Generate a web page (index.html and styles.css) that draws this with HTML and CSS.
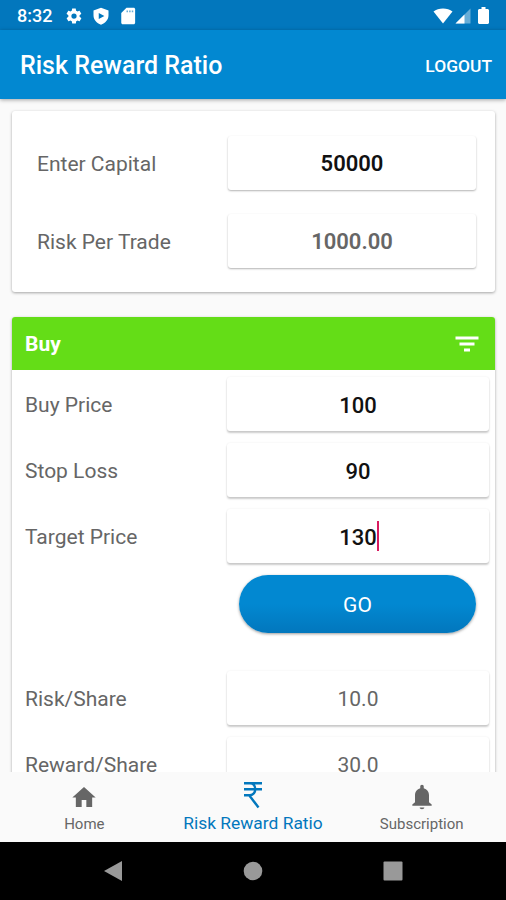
FILE: index.html
```
<!DOCTYPE html>
<html lang="en">
<head>
  <meta charset="utf-8">
  <title>Risk Reward Ratio</title>
  <link rel="stylesheet" href="styles.css">
</head>
<body>
  <div class="status-bar">
    <span class="clock">8:32</span>
    <svg class="gear" width="18" height="18" viewBox="0 0 24 24"><path d="M19.4 13a7.500 7.500 0 0 0 0-2l2.100-1.600c.2-.2.250-.4.100-.7l-2-3.400c-.1-.2-.4-.3-.6-.2l-2.500 1a7.300 7.300 0 0 0-1.700-1l-.4-2.600c0-.3-.2-.5-.5-.5h-4c-.2 0-.4.2-.5.5l-.4 2.600a7.300 7.300 0 0 0-1.700 1l-2.500-1c-.2-.1-.5 0-.6.2l-2 3.400c-.1.200-.1.500.1.700L4.500 11a7.500 7.500 0 0 0 0 2l-2.100 1.600c-.2.200-.2.400-.1.700l2 3.400c.1.200.4.300.6.200l2.500-1c.5.4 1.100.7 1.700 1l.4 2.600c0 .3.200.5.500.5h4c.2 0 .5-.2.500-.5l.4-2.600c.6-.3 1.200-.6 1.700-1l2.500 1c.2.100.5 0 .6-.2l2-3.400c.1-.2.100-.5-.1-.7zM12 15.500a3.500 3.500 0 1 1 0-7 3.500 3.500 0 0 1 0 7z"/></svg>
    <svg class="shield" width="18" height="18" viewBox="0 0 24 24"><path fill-rule="evenodd" d="M12 1 2 4.500V11c0 6 4.200 10.500 10 12.500 5.800-2 10-6.500 10-12.500V4.500zM9 8l7.500 4L9 16z"/></svg>
    <svg class="card-icon" width="18" height="18" viewBox="0 0 24 24"><path d="M19.500 1H10L3 8v13c0 1.100.9 2 2 2h14.500c1.100 0 2-.9 2-2V3c0-1.100-.9-2-2-2z"/><path d="M10 4.500h2V7h-2zm3.500 0h2V7h-2zm3.500 0h2V7h-2z" fill="#0277bd" opacity=".6"/></svg>
    <span class="spacer"></span>
    <svg class="wifi" width="20" height="16" viewBox="0 0 20 16"><path d="M10 15.500.5 3.500C3 1.500 6.300.5 10 .5s7 1 9.500 3z"/></svg>
    <svg class="signal" width="16" height="16" viewBox="0 0 16 16"><path d="M15.500.5v15H.5z" opacity=".4"/><path d="M9.500 6.500v9h-9z"/></svg>
    <svg class="battery" width="11" height="17" viewBox="0 0 11 17"><path d="M3.500 0h4v2H10l1 1v13l-1 1H1l-1-1V3l1-1h2.500z"/></svg>
  </div>
  <header>
    <h1>Risk Reward Ratio</h1>
    <a class="logout">LOGOUT</a>
  </header>
  <main>
    <section class="card capital">
      <div class="row">
        <label>Enter Capital</label>
        <div class="field">50000</div>
      </div>
      <div class="row">
        <label>Risk Per Trade</label>
        <div class="field grey">1000.00</div>
      </div>
    </section>
    <section class="card buy">
      <div class="card-title">
        <h2>Buy</h2>
        <svg width="24" height="18" viewBox="0 0 24 18"><path d="M.5 1.500h23v3H.5zM4.500 7.500h15v3h-15zM9 13.500h6v3H9z"/></svg>
      </div>
      <div class="row">
        <label>Buy Price</label>
        <div class="field">100</div>
      </div>
      <div class="row">
        <label>Stop Loss</label>
        <div class="field">90</div>
      </div>
      <div class="row">
        <label>Target Price</label>
        <div class="field">130<span class="cursor"></span></div>
      </div>
      <div class="go-row">
        <button>GO</button>
      </div>
      <div class="row">
        <label>Risk/Share</label>
        <div class="field result">10.0</div>
      </div>
      <div class="row">
        <label>Reward/Share</label>
        <div class="field result">30.0</div>
      </div>
    </section>
  </main>
  <nav class="tabs">
    <a class="tab">
      <svg width="28" height="28" viewBox="0 0 24 24"><path d="M10 20.500v-6h4v6h5v-8h3L12 3.500 2 12.500h3v8z"/></svg>
      <span>Home</span>
    </a>
    <a class="tab active">
      <svg width="28" height="28" viewBox="0 0 28 28"><path d="M5 2.200h18M5 8.200h18M5 14.200h6c7 0 7-12 0-12M10 14l9.500 12.500" fill="none" stroke="currentColor" stroke-width="2.400"/></svg>
      <span>Risk Reward Ratio</span>
    </a>
    <a class="tab">
      <svg width="28" height="28" viewBox="0 0 24 24"><path d="M12 22.500c1.100 0 2-.7 2-1.500h-4c0 .8.900 1.500 2 1.500zm6-6v-6c0-3-1.800-5.300-4.500-6V3c0-.9-.6-1.500-1.500-1.500s-1.500.6-1.500 1.500v1.500c-2.700.7-4.500 3-4.500 6v6l-2.300 2v1h16.600v-1z"/></svg>
      <span>Subscription</span>
    </a>
  </nav>
  <div class="system-nav">
    <svg width="20" height="22" viewBox="0 0 20 22"><path d="M19 1v20L1 11z"/></svg>
    <svg width="20" height="20" viewBox="0 0 20 20"><circle cx="10" cy="10" r="9.300"/></svg>
    <svg width="20" height="20" viewBox="0 0 20 20"><rect x=".5" y=".5" width="19" height="19" rx="1"/></svg>
  </div>
</body>
</html>
```
FILE: styles.css
```
* {
  box-sizing: border-box;
}
body {
  font-family: Roboto, sans-serif;
  font-size: 21px;
  background: #fafafa;
  color: #666;
  margin: 0;
  height: 900px;
  display: flex;
  flex-direction: column;
  overflow: hidden;
}
svg {
  fill: currentColor;
  flex: none;
}
.status-bar {
  height: 30px;
  flex: none;
  background: #0277bd;
  color: #fff;
  display: flex;
  align-items: center;
  padding: 1px 17px 0 17px;
}
.clock {
  font-size: 18px;
  font-weight: 500;
  width: 48px;
}
.gear, .shield {
  margin-right: 9px;
}
.spacer {
  flex: 1;
}
.wifi {
  margin-right: 2px;
}
.signal {
  margin-right: 7px;
}
header {
  height: 69px;
  flex: none;
  background: #0288d1;
  color: #fff;
  display: flex;
  align-items: center;
  justify-content: space-between;
  padding: 2px 14px 0 20px;
  box-shadow: 0 1px 4px rgba(0, 0, 0, 0.35);
  z-index: 1;
}
h1 {
  font-size: 25px;
  font-weight: 500;
  margin: 0;
}
.logout {
  font-size: 17.4px;
  font-weight: 500;
}
main {
  flex: 1;
  min-height: 0;
  overflow: hidden;
  padding: 12px 11px 0 12px;
}
.card {
  background: #fff;
  border-radius: 3px;
  box-shadow: 0 1px 3px rgba(0, 0, 0, 0.35);
}
.capital {
  height: 181px;
  padding: 24px 19px 0 25px;
  margin-bottom: 25px;
}
.row {
  display: flex;
  align-items: center;
  justify-content: space-between;
}
label {
  padding-top: 2px;
}
.capital .row {
  height: 55px;
  margin-bottom: 23px;
}
.field {
  width: 262px;
  height: 54px;
  padding-top: 2px;
  display: flex;
  align-items: center;
  justify-content: center;
  background: #fff;
  border-radius: 3px;
  box-shadow: 0 2px 2px rgba(0, 0, 0, 0.2), 0 0 2px rgba(0, 0, 0, 0.08);
  color: #111;
  font-size: 22px;
  font-weight: 500;
}
.capital .field {
  width: 248px;
  font-weight: 600;
  box-shadow: 0 1px 2px rgba(0, 0, 0, 0.3);
}
.capital .grey {
  color: #666;
}
.card-title {
  height: 53px;
  background: #64dd17;
  color: #fff;
  border-radius: 3px 3px 0 0;
  display: flex;
  align-items: center;
  justify-content: space-between;
  padding: 0 16px 0 13px;
}
h2 {
  font-size: 21px;
  font-weight: 700;
  margin: 0;
}
.buy {
  height: 600px;
}
.buy .row {
  height: 66px;
  padding: 2px 6px 0 13px;
}
.field.result {
  color: #666;
  font-size: 21px;
  font-weight: 400;
}
.cursor {
  width: 2px;
  height: 30px;
  margin: 0 -2px 2px 0;
  background: #d81b60;
}
.go-row {
  height: 96px;
  padding: 7px 19px 0 227px;
}
button {
  width: 100%;
  height: 58px;
  border: 0;
  border-radius: 29px;
  background: linear-gradient(#0288d1 50%, #0277bd);
  color: #fff;
  font: 400 21px Roboto, sans-serif;
  padding: 2px 0 0;
  box-shadow: 0 1px 3px rgba(0, 0, 0, 0.4);
}
.tabs {
  height: 70px;
  flex: none;
  display: flex;
  background: #fafafa;
}
.tab {
  flex: 1;
  display: flex;
  flex-direction: column;
  align-items: center;
  padding-top: 11px;
  font-size: 15px;
  line-height: 20px;
}
.tab span {
  margin-top: 3px;
}
.tab.active {
  color: #0277bd;
  font-size: 17.4px;
  padding-top: 9px;
}
.tab.active span {
  margin-top: 4px;
}
.system-nav {
  height: 58px;
  flex: none;
  background: #000;
  color: #999;
  display: flex;
  align-items: center;
  justify-content: space-between;
  padding: 0 103px;
}
```
